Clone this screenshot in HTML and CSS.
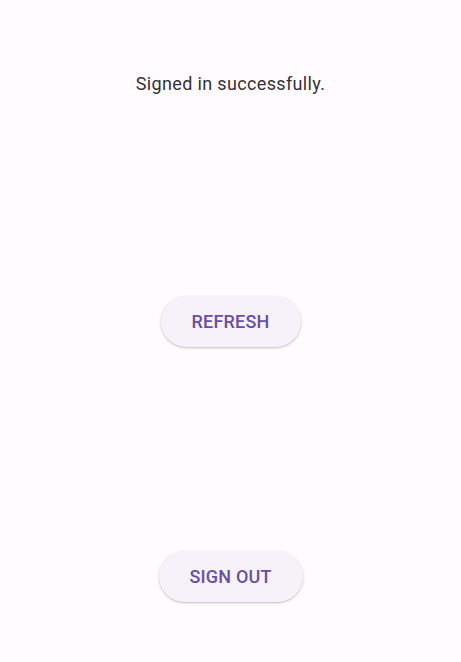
FILE: index.html
```html
<!DOCTYPE html>
<html>
<head>
<meta charset="utf-8">
<link rel="stylesheet" href="styles.css">
</head>
<body>
<main class="screen">
  <p class="status">Signed in successfully.</p>
  <button class="pill refresh">REFRESH</button>
  <button class="pill signout">SIGN OUT</button>
</main>
</body>
</html>
```
FILE: styles.css
```css
html, body {
  margin: 0;
  padding: 0;
  background: #FFFBFE;
}
.screen {
  width: 461px;
  height: 662px;
  display: flex;
  flex-direction: column;
  align-items: center;
  font-family: Roboto, "Noto Sans", sans-serif;
}
.status {
  margin: 72px 0 0 0;
  font-size: 18px;
  line-height: 24px;
  color: #333136;
  letter-spacing: 0.35px;
}
.pill {
  height: 51px;
  border: none;
  border-radius: 26px;
  background: #F7F2FA;
  color: #6750A4;
  font-family: Roboto, "Noto Sans", sans-serif;
  font-size: 18px;
  font-weight: 500;
  letter-spacing: 0.2px;
  box-shadow: 0 1px 3px rgba(0,0,0,0.2), 0 1px 1px rgba(0,0,0,0.06);
  padding: 0;
}
.refresh {
  width: 140px;
  margin-top: 200px;
}
.signout {
  width: 144px;
  margin-top: 204px;
}
```
